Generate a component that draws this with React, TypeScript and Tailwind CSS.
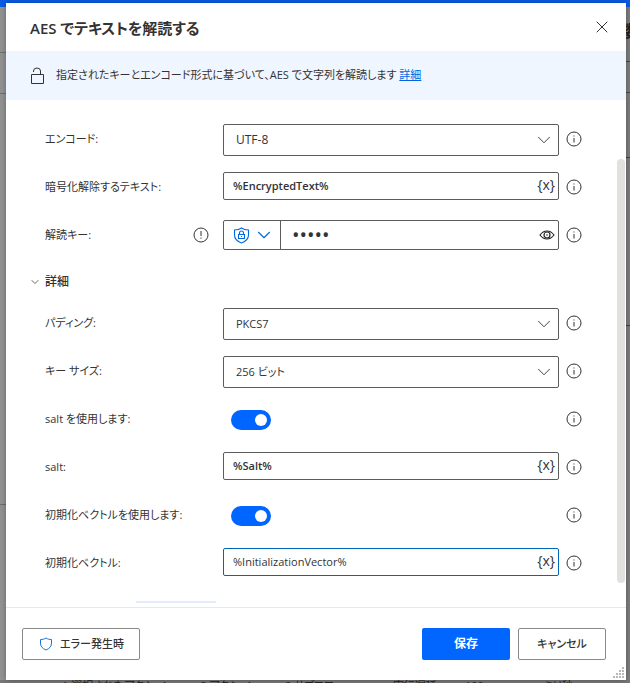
import { ChevronDown, X } from "lucide-react";

interface FieldRowProps {
  id: string;
  label: string;
  warning?: boolean;
  children: React.ReactNode;
}

function InfoIcon() {
  return (
    <svg width="16" height="16" viewBox="0 0 16 16" fill="none" stroke="#333333">
      <circle cx="8" cy="8" r="7" />
      <path d="M8 7v4.5M8 4.5v1" />
    </svg>
  );
}

function WarningIcon() {
  return (
    <svg width="16" height="16" viewBox="0 0 16 16" fill="none" stroke="#333333">
      <circle cx="8" cy="8" r="7" />
      <path d="M8 4v5M8 10.5v1.2" />
    </svg>
  );
}

function FieldRow({ id, label, warning, children }: FieldRowProps) {
  return (
    <div className="flex h-12">
      <div className="flex w-[178px] shrink-0 justify-between pr-[14px]">
        <label htmlFor={id} className="flex h-[46px] items-center whitespace-nowrap">
          {label}
        </label>
        {warning && (
          <span className="flex h-[46px] items-center">
            <WarningIcon />
          </span>
        )}
      </div>
      <div className="min-w-0 flex-1 pt-2">{children}</div>
      <button type="button" aria-label="情報" className="flex h-[46px] w-[30px] shrink-0 items-center justify-center">
        <InfoIcon />
      </button>
    </div>
  );
}

function SelectField({ id, label, value, bold }: { id: string; label: string; value: string; bold?: boolean }) {
  return (
    <FieldRow id={id} label={label}>
      <div className="relative">
        <select
          id={id}
          className={`h-8 w-full appearance-none rounded-xs border border-[#5c5c5c] bg-white px-3 ${bold ? "text-xs font-medium" : ""}`}
        >
          <option>{value}</option>
        </select>
        <ChevronDown size={22} strokeWidth={1} className="pointer-events-none absolute top-[5px] right-1" />
      </div>
    </FieldRow>
  );
}

function VariableField({ id, label, value, active }: { id: string; label: string; value: string; active?: boolean }) {
  return (
    <FieldRow id={id} label={label}>
      <div
        className={`flex h-7 items-center rounded-xs border bg-white ${active ? "border-[#0067b8]" : "border-[#5c5c5c]"}`}
      >
        <input
          id={id}
          type="text"
          defaultValue={value}
          className={`min-w-0 flex-1 px-[9px] outline-none ${active ? "" : "font-semibold"}`}
        />
        <button type="button" className="px-[3px] pb-0.5 text-sm leading-4">
          {"{x}"}
        </button>
      </div>
    </FieldRow>
  );
}

function ToggleField({ id, label }: { id: string; label: string }) {
  return (
    <FieldRow id={id} label={label}>
      <div className="flex h-8 items-center px-2">
        <input
          id={id}
          type="checkbox"
          role="switch"
          defaultChecked
          className="h-5 w-10 appearance-none rounded-full bg-[#0066ff] p-1 before:ml-5 before:block before:size-3 before:rounded-full before:bg-white"
        />
      </div>
    </FieldRow>
  );
}

function PasswordField({ id, label }: { id: string; label: string }) {
  return (
    <FieldRow id={id} label={label} warning>
      <div className="flex h-[30px] items-stretch rounded-xs border border-[#5c5c5c] bg-white">
        <button
          type="button"
          aria-label="入力の種類"
          className="flex w-[57px] items-center gap-[3px] border-r border-[#5c5c5c] pl-[9px] text-[#0066e0]"
        >
          <svg width="17" height="17" viewBox="0 0 17 17" fill="none" stroke="currentColor" strokeWidth="1.1">
            <path d="M8.5 1C6.5 2.5 4 3 1.5 3v5c0 4 3 6.5 7 8 4-1.5 7-4 7-8V3c-2.5 0-5-.5-7-2Z" />
            <path d="M5.5 7.5h6v4h-6zM6.5 7.5V6a2 2 0 0 1 4 0v1.5M8.5 9v1" />
          </svg>
          <ChevronDown size={22} strokeWidth={1.2} />
        </button>
        <input
          id={id}
          type="password"
          defaultValue="aaaaa"
          className="min-w-0 flex-1 px-[11px] text-xl outline-none"
        />
        <button type="button" aria-label="パスワードを表示" className="px-[3px]">
          <svg width="16" height="10" viewBox="0 0 16 10" fill="none" stroke="#222222" strokeWidth="1.2">
            <path d="M1 5c2-2.7 4.3-4 7-4s5 1.3 7 4c-2 2.7-4.3 4-7 4S3 7.7 1 5Z" />
            <circle cx="8" cy="5" r="3" />
            <circle cx="8" cy="5" r=".8" fill="#222222" stroke="none" />
          </svg>
        </button>
      </div>
    </FieldRow>
  );
}

// The dimmed designer window behind the dialog
function Backdrop() {
  return (
    <div className="absolute inset-0 flex flex-col overflow-hidden bg-[#7c7c7c]">
      <div className="h-[7px] shrink-0 bg-[#0a5be6]" />
      <div className="flex flex-1 justify-between">
        <div className="w-2 bg-[#919191]">
          <div className="h-[46px] border-b border-[#6e6e6e]" />
          <div className="h-[41px] border-b border-[#6e6e6e]" />
          <div className="h-[411px] border-b border-[#6e6e6e]" />
        </div>
        <div className="w-[5px] overflow-hidden">
          <div className="h-[55px] border-b border-[#444444] pt-3 text-base font-bold text-[#222222]">数</div>
          <div className="h-[31px] border-b border-[#444444]" />
          <div className="h-[65px] border-b border-[#0c4a94]" />
          <div className="h-[168px] border-b border-[#0c4a94]" />
        </div>
      </div>
      <div className="flex h-[3px] shrink-0 gap-7 bg-[#777777] pl-[62px] leading-3 whitespace-nowrap text-[#222222]">
        <span>1 選択されたアクション</span>
        <span>2 アクション</span>
        <span>2 サブフロー</span>
        <span className="pl-5">実行遅延</span>
        <span>100</span>
        <span className="pl-8">ミリ秒</span>
      </div>
    </div>
  );
}

export default function App() {
  return (
    <div
      lang="ja"
      className="relative flex min-h-screen flex-col pt-[3px] pr-1 pb-[3px] pl-[6px] font-['Open_Sans','Noto_Sans_CJK_JP',sans-serif] text-[11px] text-[#333333] [font-feature-settings:'palt']"
    >
      <Backdrop />
      <main className="relative flex flex-1 flex-col bg-white shadow-[0_0_5px_rgba(0,0,0,0.3)]">
        <header className="flex h-12 items-center justify-between pr-[14px] pl-6">
          <h1 className="pt-0.5 text-[15px] font-semibold">AES でテキストを解読する</h1>
          <button type="button" aria-label="閉じる">
            <X size={20} strokeWidth={1.2} />
          </button>
        </header>

        <div className="flex h-[49px] items-center gap-3 bg-[#f0f6ff] pl-6">
          <svg width="14" height="18" viewBox="0 0 14 18" fill="none" stroke="#333333">
            <path d="M1.5 7.5h12v9h-12zM3.5 5V4a3.5 3 0 0 1 7 0v3.5" />
          </svg>
          <p>
            指定されたキーとエンコード形式に基づいて、AES で文字列を解読します{" "}
            <a href="#" className="text-[#0066e0] underline">
              詳細
            </a>
          </p>
        </div>

        <div className="flex flex-1">
          <div className="flex min-w-0 flex-1 flex-col pt-4 pr-7 pl-[39px]">
            <SelectField id="encoding" label="エンコード:" value="UTF-8" bold />
            <VariableField id="text" label="暗号化解除するテキスト:" value="%EncryptedText%" />
            <PasswordField id="key" label="解読キー:" />
            <button type="button" className="-ml-4 flex h-10 items-center gap-1 pt-1 text-xs font-medium">
              <ChevronDown size={12} strokeWidth={1.5} />
              詳細
            </button>
            <SelectField id="padding" label="パディング:" value="PKCS7" />
            <SelectField id="key-size" label="キー サイズ:" value="256 ビット" />
            <ToggleField id="use-salt" label="salt を使用します:" />
            <VariableField id="salt" label="salt:" value="%Salt%" />
            <ToggleField id="use-iv" label="初期化ベクトルを使用します:" />
            <VariableField id="iv" label="初期化ベクトル:" value="%InitializationVector%" active />
            <div className="mt-[13px] mb-1 ml-[91px] h-[2px] w-20 bg-[#e2ecfa]" />
          </div>
          <div className="w-[9px] pt-[59px] pr-px pb-6">
            <div className="h-full rounded-full bg-[#e1e1df]" />
          </div>
        </div>

        <footer className="flex items-start gap-2 border-t border-[#e8e8e8] py-5 pr-5 pl-4 font-medium">
          <button
            type="button"
            className="mr-auto flex h-8 w-[118px] items-center gap-[7px] rounded-xs border border-[#8a8a8a] pl-4"
          >
            <svg width="14" height="14" viewBox="0 0 14 14" fill="none" stroke="#1673d8">
              <path d="M7 1C5.3 2.2 3.5 2.5 1.5 2.5V6c0 3.5 2 5.5 5.5 7 3.5-1.5 5.5-3.5 5.5-7V2.5C10.5 2.5 8.7 2.2 7 1Z" />
            </svg>
            エラー発生時
          </button>
          <button type="button" className="h-8 w-[88px] rounded-xs bg-[#0066ff] text-xs font-semibold text-white">
            保存
          </button>
          <button type="button" className="h-8 w-[88px] rounded-xs border border-[#8a8a8a]">
            キャンセル
          </button>
        </footer>
        <svg className="absolute right-0.5 bottom-0.5" width="11" height="11" viewBox="0 0 11 11" fill="#b8b8b8">
          <path d="M9 0h2v2H9zM6 3h2v2H6zM9 3h2v2H9zM3 6h2v2H3zM6 6h2v2H6zM9 6h2v2H9zM0 9h2v2H0zM3 9h2v2H3zM6 9h2v2H6zM9 9h2v2H9z" />
        </svg>
      </main>
    </div>
  );
}
